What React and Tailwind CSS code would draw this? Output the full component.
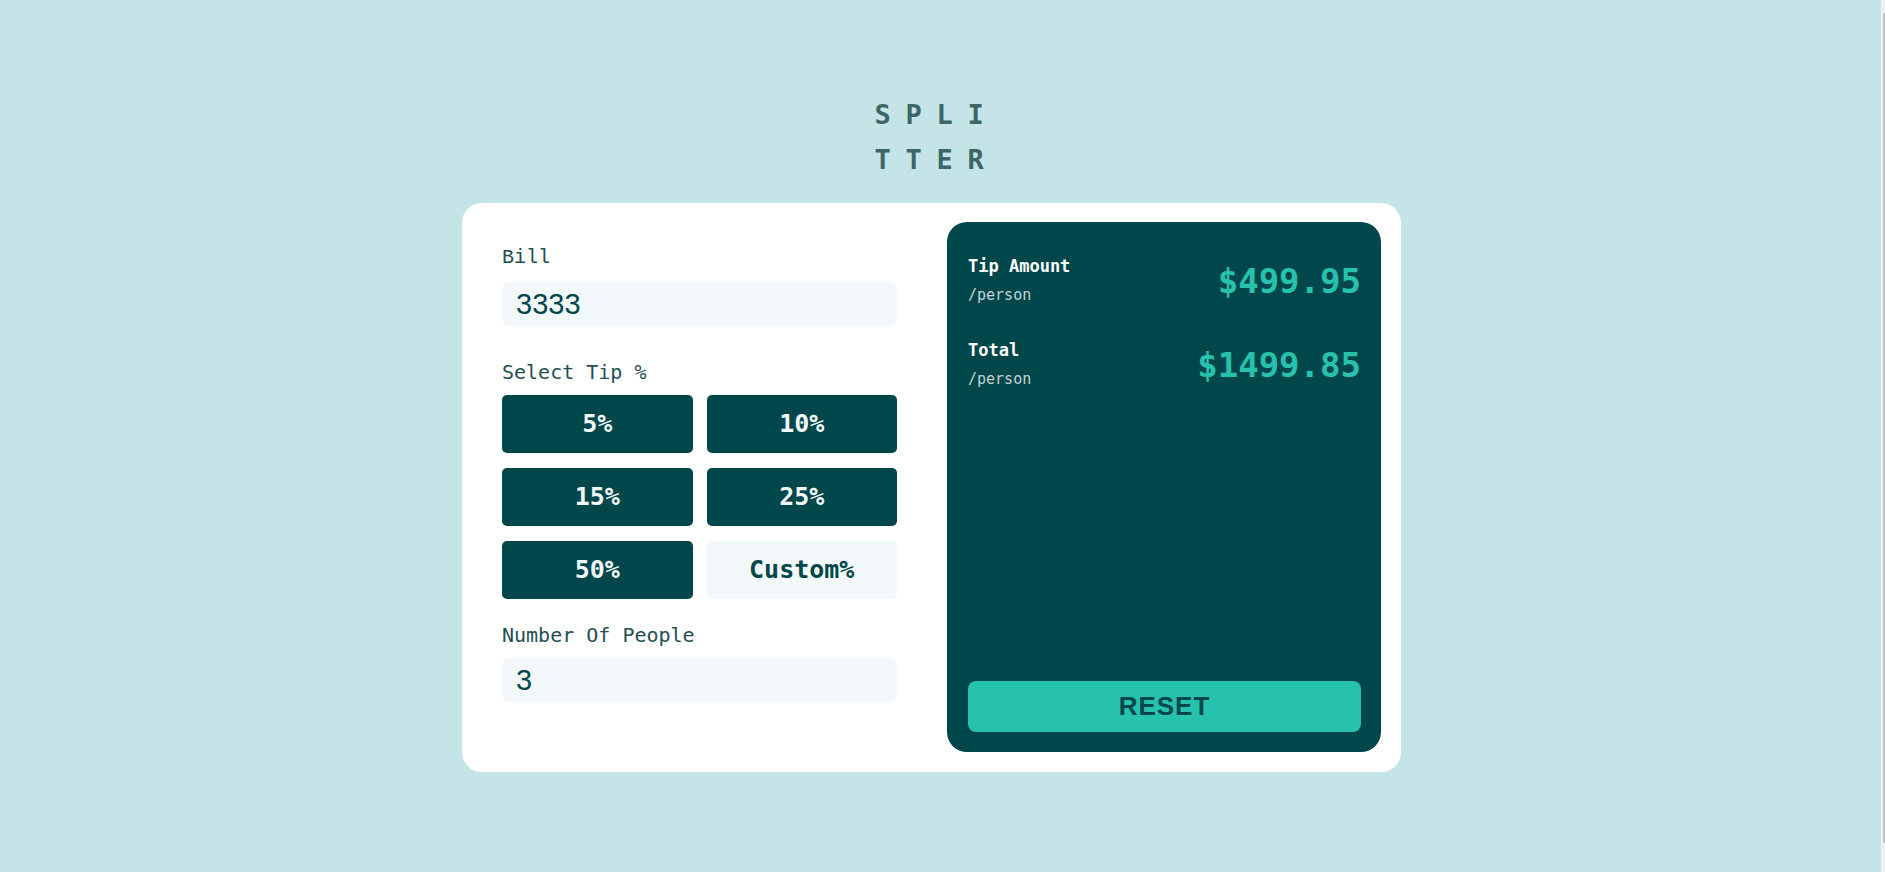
import React from "react";

const mono = "font-['DejaVu_Sans_Mono',monospace]";

function TipButton({ label, light }) {
  return (
    <button
      className={`h-[58px] rounded-[5px] text-[25px] font-bold ${mono} ${
        light ? "bg-[#f3f9fa] text-[#00474b]" : "bg-[#00474b] text-[#f3f9fa]"
      }`}
    >
      {label}
    </button>
  );
}

function ResultRow({ label, value, className = "" }) {
  return (
    <div className={`flex items-start justify-between ${className}`}>
      <div className="flex flex-col">
        <span className={`text-[17px] leading-[24px] font-bold text-white ${mono}`}>{label}</span>
        <span className={`mt-[7px] text-[15px] leading-[20px] text-[#c3d3d4] ${mono}`}>/person</span>
      </div>
      <span className={`mt-[7px] text-[34px] leading-[40px] font-bold text-[#26c2ae] ${mono}`}>{value}</span>
    </div>
  );
}

export default function App() {
  return (
    <div className="relative min-h-screen w-full bg-[#c5e4e7] pt-[92px] pb-[100px]">
      <div className="flex justify-center pr-[12px]">
        <div className={`text-[27px] leading-[45px] font-bold tracking-[14.7px] text-[#3d6666] ${mono}`}>
          <div>SPLI</div>
          <div>TTER</div>
        </div>
      </div>

      <div className="mt-[21px] flex justify-center pr-[22px]">
        <div className="flex w-[939px] rounded-[20px] bg-white pt-[19px] pr-[20px] pb-[20px] pl-[40px]">
          <div className="flex w-[395px] flex-col pt-[21px] pb-[50px]">
            <label className="text-[20px] leading-[30px] text-[#1f4f52] font-['Liberation_Mono',monospace]">Bill</label>
            <input
              readOnly
              value="3333"
              className="mt-[9px] h-[44px] w-full rounded-[8px] bg-[#f3f9fa] pl-[14px] text-[29px] text-[#00474b] outline-none font-['Liberation_Sans',Arial,sans-serif]"
            />

            <label className={`mt-[31px] text-[20px] leading-[30px] text-[#1f4f52] ${mono}`}>Select Tip %</label>
            <div className="mt-[8px] grid grid-cols-2 gap-x-[14px] gap-y-[15px]">
              <TipButton label="5%" />
              <TipButton label="10%" />
              <TipButton label="15%" />
              <TipButton label="25%" />
              <TipButton label="50%" />
              <TipButton label="Custom%" light />
            </div>

            <label className={`mt-[21px] text-[20px] leading-[30px] text-[#1f4f52] ${mono}`}>Number Of People</label>
            <input
              readOnly
              value="3"
              className="mt-[8px] h-[44px] w-full rounded-[8px] bg-[#f3f9fa] pl-[14px] text-[29px] text-[#00474b] outline-none font-['Liberation_Sans',Arial,sans-serif]"
            />
          </div>

          <div className="ml-[50px] flex flex-1 flex-col justify-between rounded-[20px] bg-[#00474b] pt-[32px] pr-[20px] pb-[20px] pl-[21px]">
            <div className="flex flex-col">
              <ResultRow label="Tip Amount" value="$499.95" />
              <ResultRow label="Total" value="$1499.85" className="mt-[33px]" />
            </div>
            <button className="h-[51px] w-full rounded-[8px] bg-[#26c2ae] text-[26px] font-bold tracking-[1px] text-[#00474b] font-['Liberation_Sans',Arial,sans-serif]">
              RESET
            </button>
          </div>
        </div>
      </div>

      <div className="fixed top-0 right-0 h-full w-[4px] bg-[#f1f1f1]">
        <div className="ml-[2px] mt-[13px] h-[830px] w-[2px] bg-[#c1c1c1]" />
      </div>
    </div>
  );
}
